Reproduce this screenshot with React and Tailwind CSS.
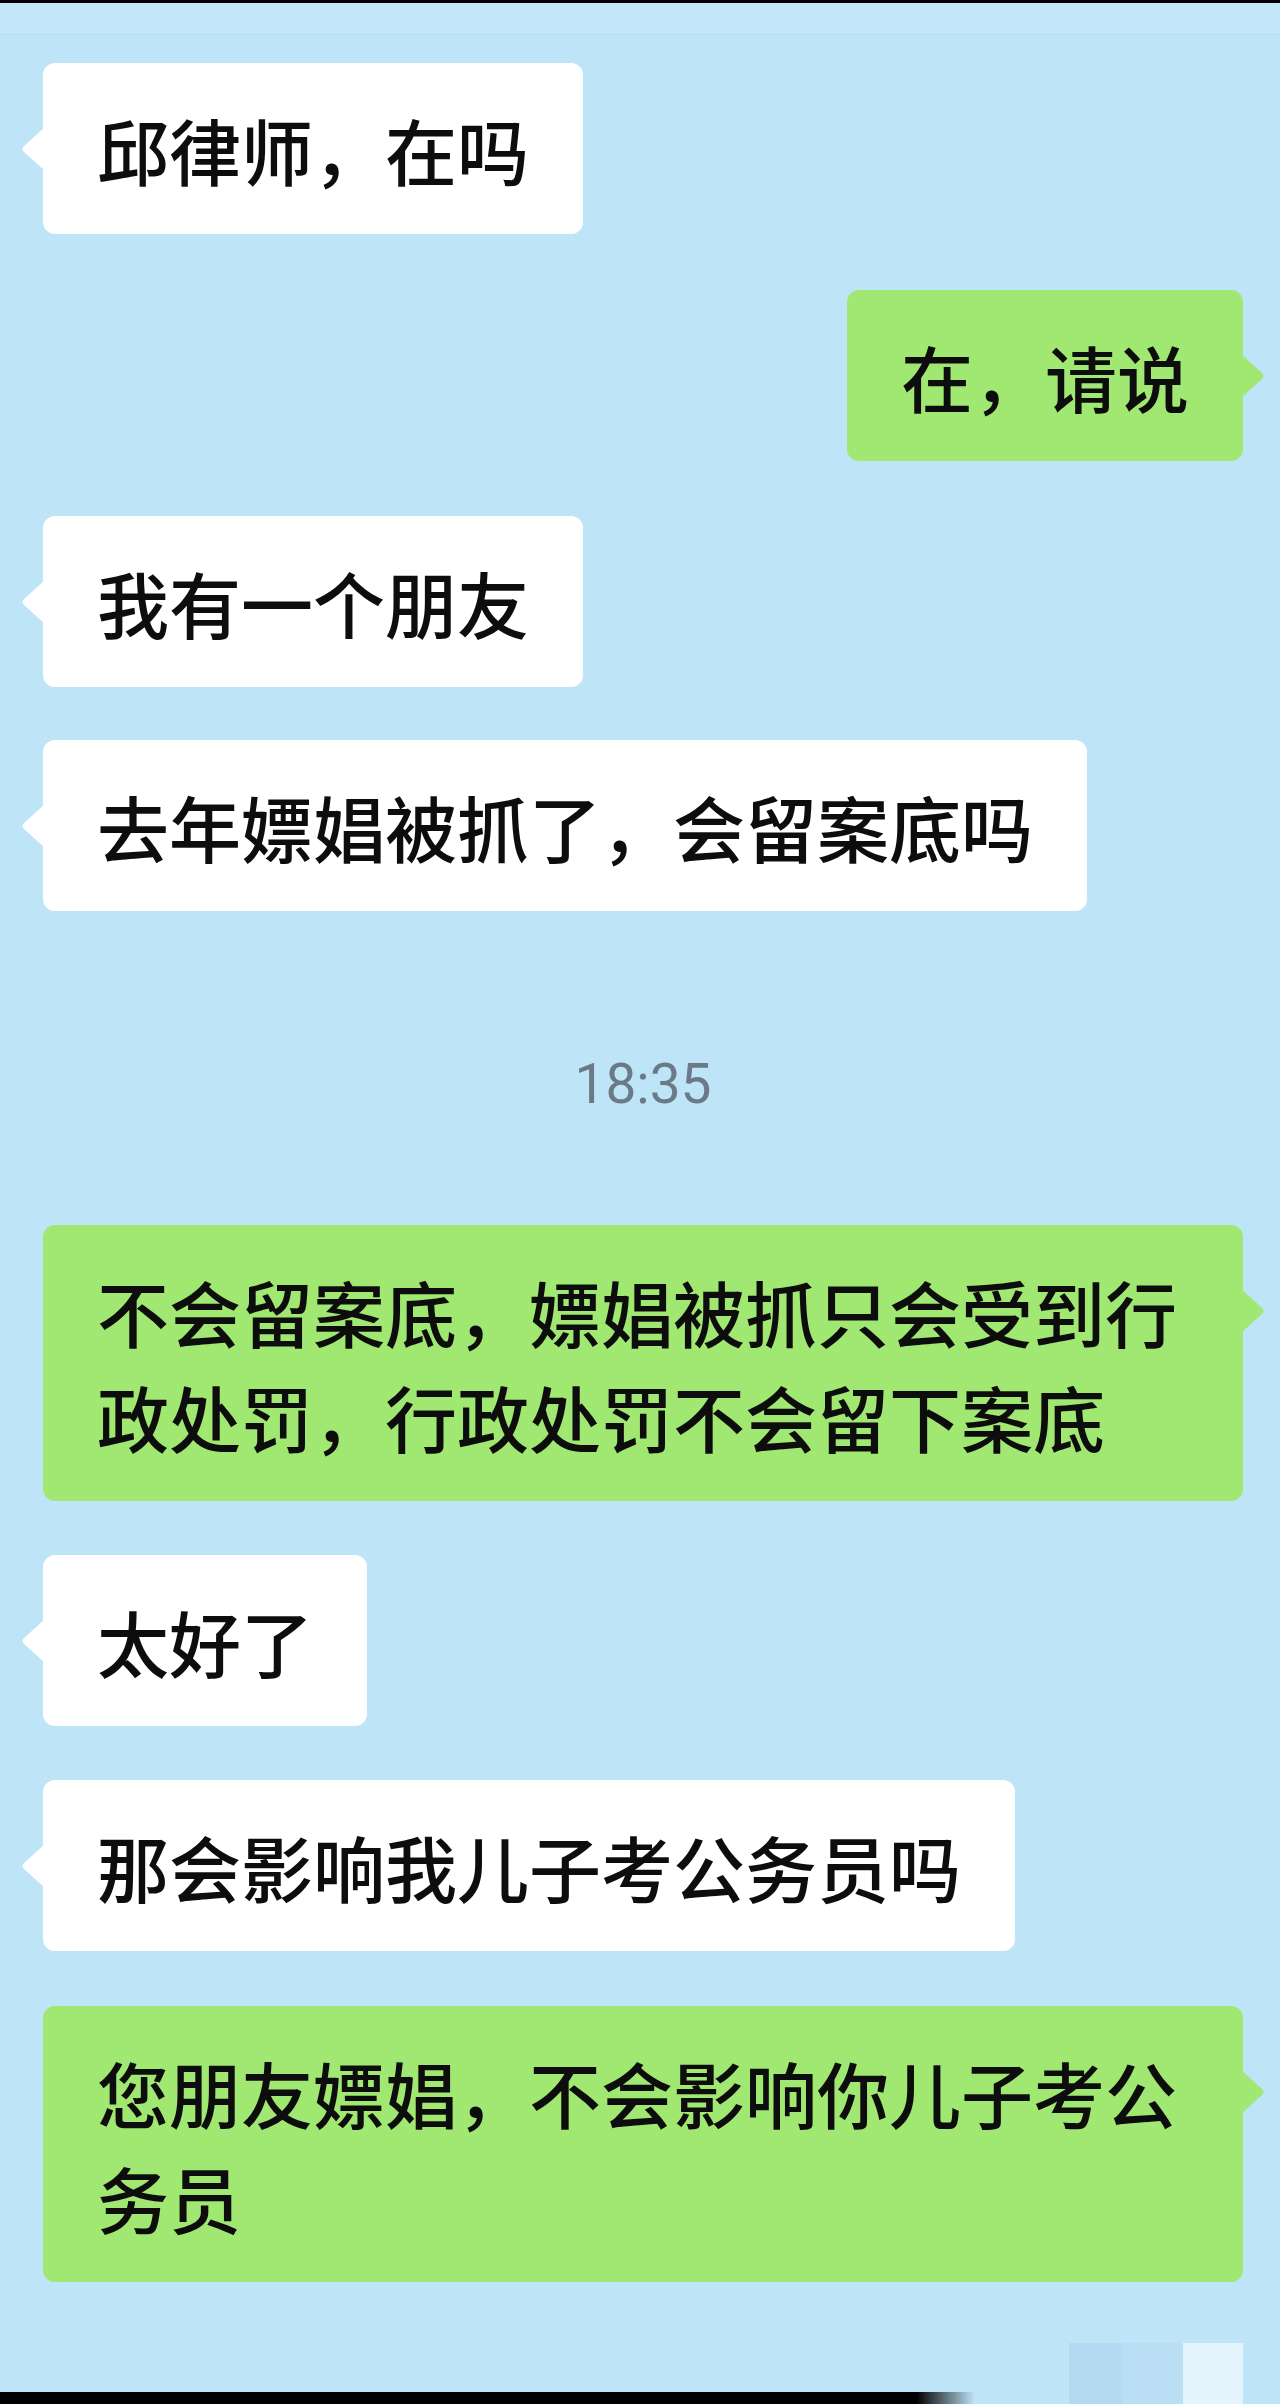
import React from "react";

const cjk = { fontFamily: '"Noto Sans CJK SC", "Noto Sans", sans-serif' };

function Tail({ side, color }) {
  if (side === "left") {
    return (
      <svg
        className="absolute left-[-22px] top-[64px]"
        width="24"
        height="44"
        viewBox="0 0 24 44"
      >
        <path d="M24 0 L3 19 Q0 22 3 25 L24 44 Z" fill={color} />
      </svg>
    );
  }
  return (
    <svg
      className="absolute right-[-22px] top-[64px]"
      width="24"
      height="44"
      viewBox="0 0 24 44"
    >
      <path d="M0 0 L21 19 Q24 22 21 25 L0 44 Z" fill={color} />
    </svg>
  );
}

function Bubble({ side, children, className = "" }) {
  const isLeft = side === "left";
  const color = isLeft ? "#ffffff" : "#a0e871";
  return (
    <div className={`flex ${isLeft ? "justify-start pl-[43px]" : "justify-end pr-[37px]"} ${className}`}>
      <div
        className={`relative max-w-[1200px] rounded-[12px] px-[54px] py-[33px] text-[72px] font-medium leading-[105px] text-[#0d0d0d] ${
          isLeft ? "bg-white" : "bg-[#a0e871]"
        }`}
        style={cjk}
      >
        <Tail side={side} color={color} />
        {children}
      </div>
    </div>
  );
}

export default function App() {
  return (
    <div className="w-[1280px] h-[2404px] bg-[#bee4f8] flex flex-col overflow-hidden">
      <div className="h-[3px] bg-black" />
      <div className="h-[32px] bg-[#c3e7fa] border-b border-[#b6dcf1]" />

      <Bubble side="left" className="mt-[28px]">邱律师，在吗</Bubble>
      <Bubble side="right" className="mt-[56px]">在，请说</Bubble>
      <Bubble side="left" className="mt-[55px]">我有一个朋友</Bubble>
      <Bubble side="left" className="mt-[53px]">去年嫖娼被抓了，会留案底吗</Bubble>

      <div
        className="mt-[143px] h-[60px] flex items-center justify-center text-[55px] leading-[60px] text-[#6b7a86]"
        style={{ fontFamily: "Roboto, Inter, sans-serif" }}
      >
        <span className="ml-[6px]">18:35</span>
      </div>

      <Bubble side="right" className="mt-[111px]">
        不会留案底，嫖娼被抓只会受到行政处罚，行政处罚不会留下案底
      </Bubble>
      <Bubble side="left" className="mt-[54px]">太好了</Bubble>
      <Bubble side="left" className="mt-[54px]">那会影响我儿子考公务员吗</Bubble>
      <Bubble side="right" className="mt-[55px]">
        您朋友嫖娼，不会影响你儿子考公务员
      </Bubble>

      <div className="mt-auto flex h-[61px] flex-col">
        <div className="flex h-[49px] justify-end pr-[37px]">
          <div className="w-[53px] bg-[#b4daf2]" />
          <div className="w-[61px] bg-[#badff5]" />
          <div className="w-[60px] bg-[#e3f4fd]" />
        </div>
        <div className="flex h-[12px]">
          <div className="w-[975px] bg-gradient-to-r from-black from-[94%] to-transparent" />
          <div className="flex-1 flex justify-end pr-[37px]">
            <div className="w-[53px] bg-[#b4daf2]" />
            <div className="w-[61px] bg-[#badff5]" />
            <div className="w-[60px] bg-[#e3f4fd]" />
          </div>
        </div>
      </div>
    </div>
  );
}
